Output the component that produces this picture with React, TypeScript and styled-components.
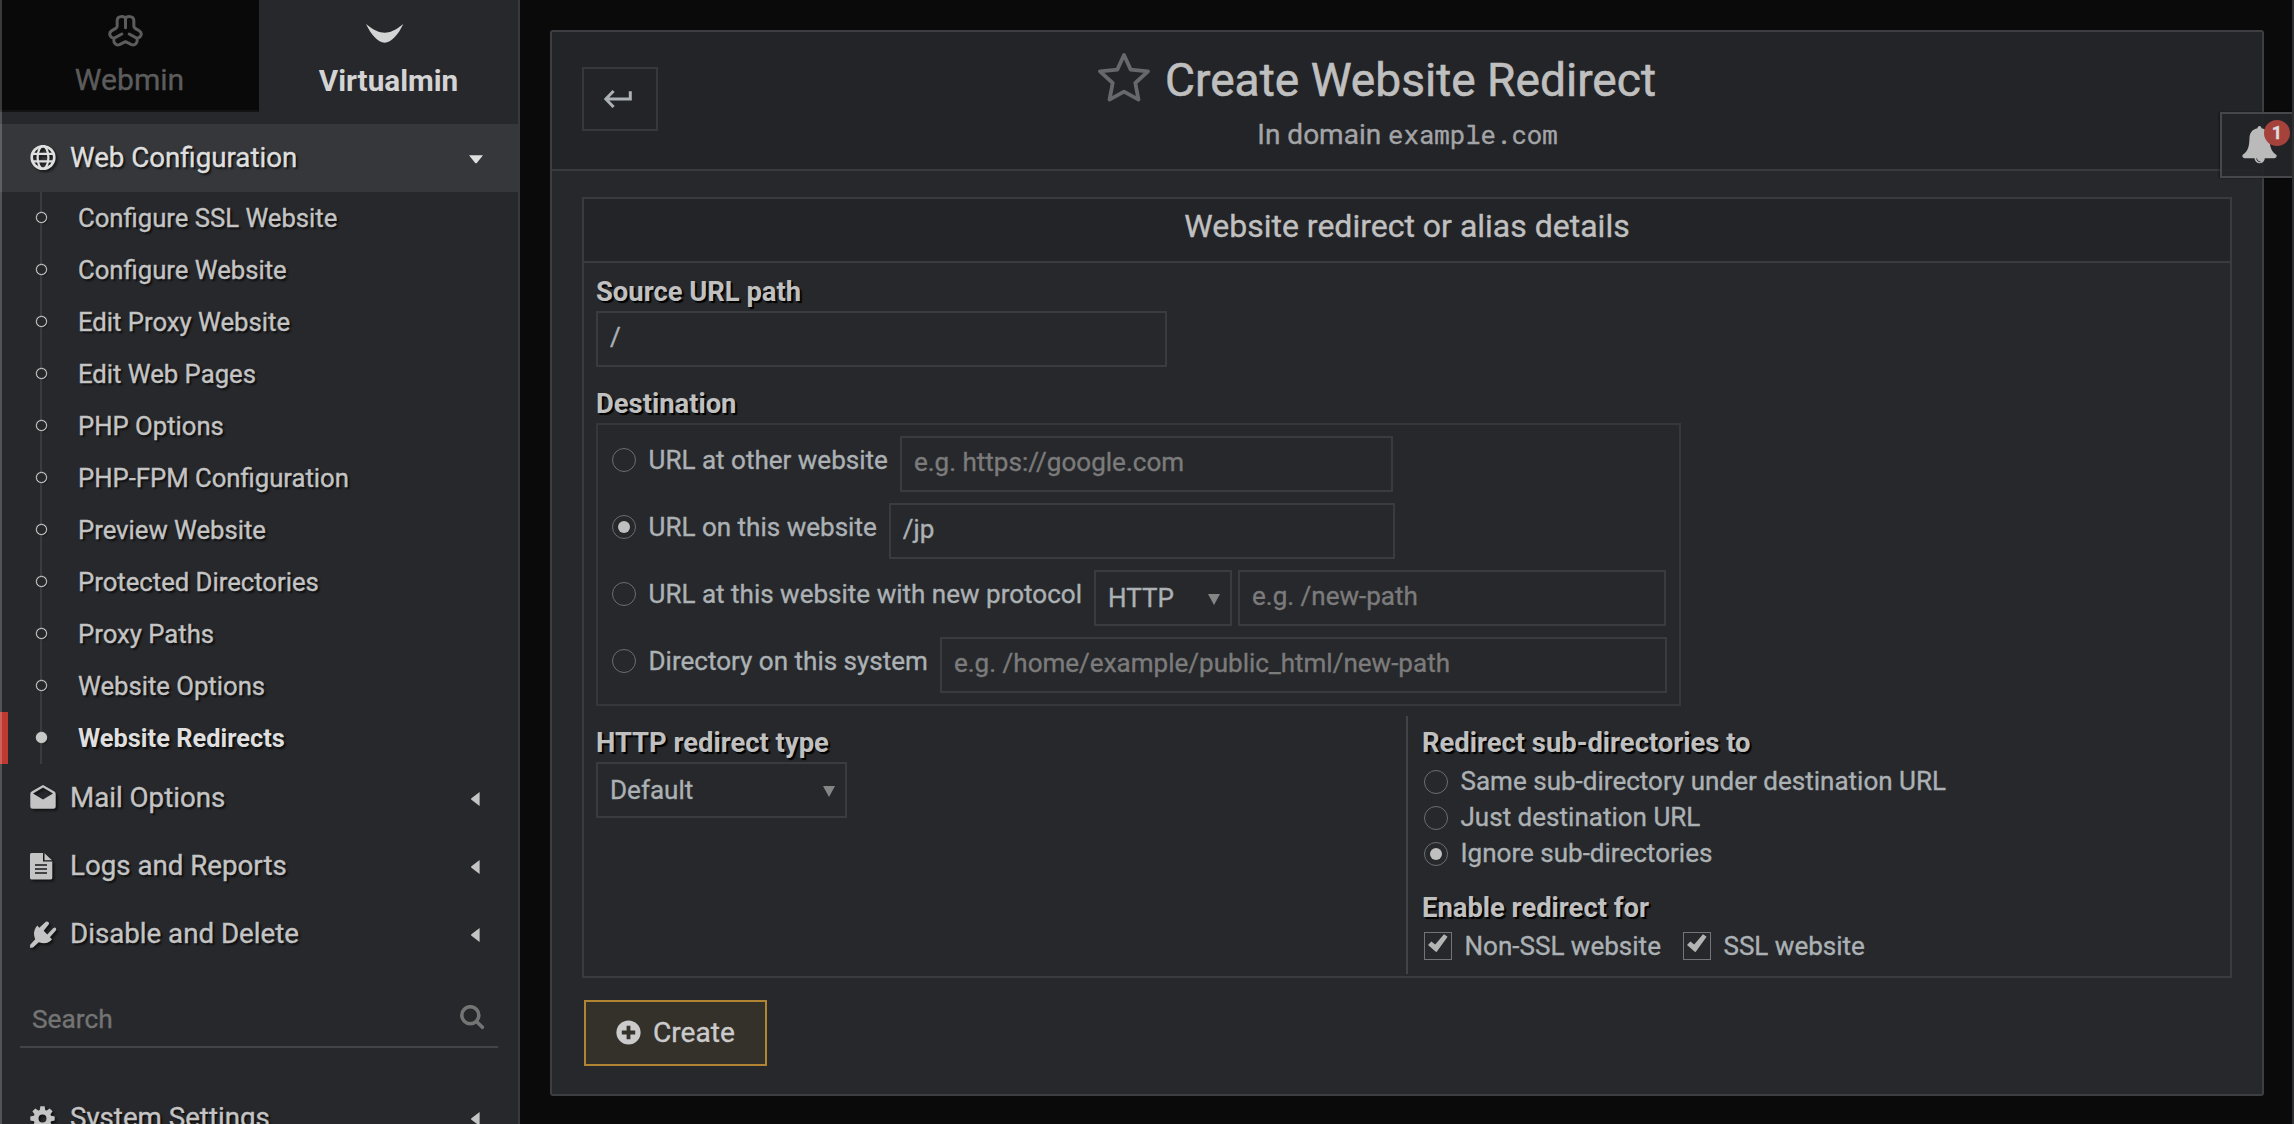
import React from 'react';
import styled, { createGlobalStyle } from 'styled-components';

const c = {
  page: '#0a0a0a',
  panel: '#27282b',
  head: '#232427',
  line: '#3a3b3f',
  text: '#c4c4c4',
  field: '#abb1b4',
  muted: '#7b7b7b',
};

const Global = createGlobalStyle`
  * { box-sizing: border-box; }
  body { margin: 0; background: ${c.page}; font-family: Roboto, "Liberation Sans", sans-serif; color: ${c.text}; -webkit-text-stroke: 0.35px; }
  input { font-family: inherit; -webkit-text-stroke: 0.35px; }
  svg { display: block; }
`;

const Screen = styled.div`
  position: relative;
  display: flex;
  width: 2294px;
  height: 1124px;
  overflow: hidden;
  background: ${c.page};
  border-right: 2px solid #2f3032;
`;

/* ---------- sidebar ---------- */

const Sidebar = styled.aside`
  position: relative;
  flex: none;
  width: 520px;
  height: 1124px;
  overflow: hidden;
  background: ${c.panel};
  border-right: 2px solid #38393c;
  &::after {
    content: '';
    position: absolute;
    inset: 0 auto 0 0;
    width: 2px;
    background: rgba(255, 255, 255, 0.2);
  }
`;

const Tabs = styled.nav`
  display: grid;
  grid-template-columns: 259px 259px;
  height: 112px;
  margin-bottom: 12px;
`;

const Tab = styled.div<{ $active?: boolean }>`
  display: flex;
  flex-direction: column;
  align-items: center;
  padding-top: ${p => (p.$active ? 24 : 15)}px;
  gap: ${p => (p.$active ? 18 : 13)}px;
  background: ${p => (p.$active ? c.panel : '#090909')};
  border-bottom: ${p => (p.$active ? 'none' : '2px solid #131313')};
  color: ${p => (p.$active ? '#d4d4d4' : '#5c5c5c')};
  font-size: ${p => (p.$active ? 29.7 : 30.1)}px;
  font-weight: ${p => (p.$active ? 700 : 400)};
  line-height: 40px;
  -webkit-text-stroke: ${p => (p.$active ? 0 : 0.35)}px;
  svg { margin-left: ${p => (p.$active ? -7 : -8)}px; flex: none; }
`;

const Section = styled.div<{ $open?: boolean }>`
  display: flex;
  align-items: center;
  height: 68px;
  padding: 0 35px 0 30px;
  background: ${p => (p.$open ? '#36373a' : 'transparent')};
  color: ${p => (p.$open ? '#dfdfdf' : c.text)};
  font-size: 27.7px;
  text-shadow: 2px 2px 2px rgba(0, 0, 0, 0.7);
`;

const SectionIcon = styled.span`
  display: flex;
  width: 40px;
  filter: drop-shadow(2px 2px 1px rgba(0, 0, 0, 0.55));
`;

const SectionName = styled.span`
  flex: 1;
  padding-bottom: 2px;
`;

const Caret = styled.span<{ $open?: boolean }>`
  display: flex;
  justify-content: center;
  width: 16px;
  margin-right: ${p => (p.$open ? -1 : 0)}px;
  padding-top: 2px;
`;

const SubItem = styled.div<{ $current?: boolean }>`
  display: flex;
  align-items: center;
  height: 52px;
  border-left: 8px solid ${p => (p.$current ? '#be3a31' : 'transparent')};
  padding-left: 27px;
  gap: 31px;
  color: ${p => (p.$current ? '#dfdfdf' : c.text)};
  font-size: ${p => (p.$current ? 25.4 : 25.68)}px;
  font-weight: ${p => (p.$current ? 700 : 400)};
  -webkit-text-stroke: ${p => (p.$current ? 0 : 0.35)}px;
  text-shadow: 2px 2px 2px rgba(0, 0, 0, 0.7);
`;

const Track = styled.span`
  display: flex;
  align-items: center;
  justify-content: center;
  align-self: stretch;
  width: 12px;
  background: linear-gradient(${c.line}, ${c.line}) center / 2px 100% no-repeat;
`;

const Dot = styled.span<{ $current?: boolean }>`
  width: 11px;
  height: 11px;
  margin-bottom: 1px;
  border: 1px solid #cfcfcf;
  border-radius: 50%;
  background: ${p => (p.$current ? '#c8c8c8' : c.panel)};
  box-shadow: 0 0 0 0.4px rgba(200, 200, 200, 0.5), 1px 1px 1px rgba(0, 0, 0, 0.4);
`;

const Search = styled.div`
  display: flex;
  align-items: center;
  justify-content: space-between;
  height: 60px;
  margin: 20px 20px 36px;
  padding: 3px 13px 0 12px;
  border-bottom: 2px solid #434448;
  color: #747474;
  font-size: 26.3px;
  svg { margin-bottom: 3px; }
`;

/* ---------- main ---------- */

const Main = styled.main`
  flex: 1;
  padding: 30px 28px 28px 30px;
`;

const Panel = styled.section`
  height: 1066px;
  background: ${c.panel};
  border: 2px solid #3d3e42;
  border-radius: 3px;
`;

const PanelHead = styled.header`
  display: grid;
  grid-template: 137px / 30px 76px 1fr 30px;
  border-bottom: 2px solid ${c.line};
  background: ${c.head};
`;

const Back = styled.button`
  grid-area: 1 / 2;
  display: flex;
  align-items: center;
  justify-content: center;
  height: 64px;
  margin: 35px 0 0;
  padding: 0 5px 0 0;
  background: transparent;
  border: 2px solid #37383b;
`;

const Titles = styled.div`
  grid-area: 1 / 1 / 2 / -1;
  justify-self: center;
  display: flex;
  flex-direction: column;
  align-items: center;
  padding-top: 18px;
`;

const Title = styled.h1`
  display: flex;
  align-items: center;
  gap: 15px;
  height: 60px;
  margin: 0;
  padding-right: 60px;
  font-size: 46.1px;
  font-weight: 400;
  color: #bfbfbf;
  white-space: nowrap;
  -webkit-text-stroke: 0.6px;
  svg { margin-bottom: 6px; }
`;

const Subtitle = styled.p`
  margin: 4px 0 0 1px;
  font-size: 28px;
  line-height: 40px;
  color: #a3a4a8;
`;

const Mono = styled.code`
  font-family: "Roboto Mono", "DejaVu Sans Mono", monospace;
  font-size: 25.7px;
`;

const PanelBody = styled.div`
  padding: 26px 30px 0;
`;

const Details = styled.div`
  height: 781px;
  border: 2px solid ${c.line};
`;

const DetailsHead = styled.h2`
  display: flex;
  align-items: center;
  justify-content: center;
  height: 64px;
  margin: 0;
  padding-bottom: 8px;
  border-bottom: 2px solid ${c.line};
  background: ${c.head};
  font-size: 32px;
  font-weight: 400;
  color: #c0c0c0;
`;

const Fields = styled.div`
  padding: 10px 12px 0;
`;

const Label = styled.div<{ $gap?: boolean }>`
  height: 38px;
  margin-top: ${p => (p.$gap ? 18 : 0)}px;
  font-size: 27.38px;
  font-weight: 700;
  line-height: 38px;
  color: #c0c0c0;
  text-shadow: 2px 2px 1px #000;
  -webkit-text-stroke: 0;
`;

const TextInput = styled.input<{ $w: number }>`
  display: block;
  flex: none;
  width: ${p => p.$w}px;
  height: 56px;
  padding: 0 12px 5px;
  border: 2px solid ${c.line};
  border-radius: 0;
  outline: none;
  background: transparent;
  font-size: 26.04px;
  color: ${c.field};
  &::placeholder { color: ${c.muted}; opacity: 1; }
`;

const SelectBox = styled.div<{ $w: number }>`
  display: flex;
  flex: none;
  align-items: center;
  justify-content: space-between;
  width: ${p => p.$w}px;
  height: 56px;
  padding: 0 10px 0 12px;
  border: 2px solid ${c.line};
  font-size: 26.04px;
  color: ${c.field};
  svg { margin-top: 3px; }
  & + input { margin-left: 6px; }
`;

const Choices = styled.div`
  display: flex;
  flex-direction: column;
  gap: 11px;
  width: 1085px;
  height: 283px;
  padding: 11px 14px;
  border: 2px solid #36373b;
`;

const Choice = styled.div`
  display: flex;
  height: 56px;
`;

const ChoiceLabel = styled.label`
  display: flex;
  align-items: center;
  height: 48px;
  margin-right: 12px;
  padding-bottom: 1px;
  font-size: 26.04px;
  color: ${c.field};
  white-space: nowrap;
`;

const OptionLabel = styled(ChoiceLabel)`
  height: 36px;
  margin-right: 22px;
  padding-bottom: 0;
`;

const Ring = styled.span`
  display: flex;
  align-items: center;
  justify-content: center;
  width: 24px;
  height: 24px;
  margin: 1px 12.5px 0 0;
  border: 1.5px solid #6c6d70;
  border-radius: 50%;
`;

const Pip = styled.span`
  width: 12px;
  height: 12px;
  border-radius: 50%;
  background: #c0c0c0;
`;

const Box = styled.span`
  display: flex;
  justify-content: center;
  width: 28px;
  height: 28px;
  margin-right: 12.5px;
  padding-top: 1px;
  border: 1.5px solid #737477;
`;

const Split = styled.div`
  display: grid;
  grid-template-columns: 810px 1fr;
  height: 258px;
  margin-top: 10px;
`;

const Column = styled.div<{ $ruled?: boolean }>`
  padding: 8px 0 0 ${p => (p.$ruled ? 14 : 0)}px;
  border-left: ${p => (p.$ruled ? '2px solid #424347' : 'none')};
`;

const Options = styled.div<{ $inline?: boolean }>`
  display: flex;
  flex-direction: ${p => (p.$inline ? 'row' : 'column')};
  padding: 1px 0 0 2px;
`;

const Create = styled.button`
  display: flex;
  align-items: center;
  gap: 12px;
  width: 183px;
  height: 66px;
  margin: 22px 0 0 2px;
  padding: 0 0 2px 30px;
  border: 2px solid #b08432;
  background: #34302a;
  font-family: inherit;
  font-size: 28.1px;
  color: #cbcbcb;
  -webkit-text-stroke: 0.35px;
`;

/* ---------- notification tab, floating over the page edge ---------- */

const Notice = styled.div`
  position: absolute;
  top: 112px;
  right: -4px;
  width: 76px;
  height: 66px;
  border: 2px solid #46474b;
  background: rgba(36, 37, 40, 0.95);
  box-shadow: -1px 0 2px rgba(0, 0, 0, 0.4);
  padding: 12px 0 0 20px;
`;

const Badge = styled.span`
  position: absolute;
  top: 6px;
  left: 42px;
  width: 26px;
  height: 26px;
  border-radius: 50%;
  background: #a5423b;
  color: #dedede;
  font-size: 18px;
  font-weight: 700;
  line-height: 25px;
  text-align: center;
`;

/* ---------- drawings ---------- */

const WebminLogo = () => (
  <svg width="35" height="32" viewBox="0 0 104 96" fill="none" stroke="currentColor" strokeWidth="9" strokeLinecap="round" strokeLinejoin="round">
    <path d="M52 11C49 2 27 2 27 16V33Q27 37 23 40L11 47C1 53 3 66 17 70C15 84 24 93 34 89L52 80L70 89C80 93 89 84 87 70C101 66 103 53 93 47L81 40Q77 37 77 33V16C77 2 55 2 52 11Z" />
    <path d="M52 11V38M17 70L41 57M87 70L63 57" />
  </svg>
);

const VirtualminLogo = () => (
  <svg width="37.3" height="18.7" viewBox="0 0 112 56" fill="currentColor">
    <path d="M0 0C25 20 40 26 56 26C72 26 87 20 112 0C97 32 76 56 56 56C36 56 15 32 0 0Z" />
  </svg>
);

const Globe = () => (
  <svg width="26" height="26" viewBox="0 0 26 26" fill="none" stroke="currentColor" strokeWidth="2.2">
    <circle cx="13" cy="12.5" r="11.3" strokeWidth="2.6" />
    <ellipse cx="13" cy="12.5" rx="5.4" ry="11.3" />
    <path d="M2.2 8.8H23.8M2.2 16.4H23.8" />
  </svg>
);

const Mail = () => (
  <svg width="26" height="26" viewBox="0 0 26 26" fill="currentColor">
    <path fillRule="evenodd" d="M13 0L24.4 6.6Q25.7 7.5 25.7 9V21.2Q25.7 23.7 23.2 23.7H2.8Q.3 23.7.3 21.2V9Q.3 7.5 1.6 6.6ZM13 2.5L3 8.6L13 14.6L23 8.6Z" />
  </svg>
);

const File = () => (
  <svg width="23" height="27" viewBox="0 0 23 27" fill="currentColor">
    <path fillRule="evenodd" d="M1.5 0H13V8.6H22.3V25Q22.3 26.4 20.9 26.4H1.5Q0 26.4 0 25V1.5Q0 0 1.5 0ZM5 11.3V12.7H17V11.3ZM5 15.3V16.7H17V15.3ZM5 19.3V20.7H17V19.3Z" />
    <path d="M14.5 .3L22 7.3H14.5Z" />
  </svg>
);

const Plug = () => (
  <svg width="27" height="27" viewBox="0 0 27 27" fill="currentColor">
    <path d="M7.2 4.6L9.3 6.7L15.8.8Q17.3 0 18.4 1T18.7 3.6L13.7 9.8L17.3 13.4L23.2 7.2Q24.9 6 25.9 7.2T25.6 9.8L19.9 16.2L22 18.3L20.4 19.9Q16 24 8.8 21.2L3 26.6L0 26.8L.2 23.8L5.2 18.2Q2.6 11.6 5.5 7Z" />
  </svg>
);

const teeth = [0, 45, 90, 135, 180, 225, 270, 315];
const Gear = () => (
  <svg width="25" height="25" viewBox="-12.5 -12.5 25 25" fill="currentColor">
    {teeth.map(a => (
      <path key={a} d="M-2.9 -7.5L-2.1 -12.2H2.1L2.9 -7.5Z" transform={`rotate(${a})`} />
    ))}
    <circle r="6.5" fill="none" stroke="currentColor" strokeWidth="5" />
  </svg>
);

const CaretLeft = () => (
  <svg width="9" height="14" viewBox="0 0 9 14" fill="currentColor"><path d="M8.6 0V14L.4 7.7Q-.2 7 .4 6.3Z" /></svg>
);
const CaretDown = () => (
  <svg width="14" height="9" viewBox="0 0 14 9" fill="currentColor"><path d="M0 .2H14L7.8 8Q7 8.7 6.2 8Z" /></svg>
);

const Magnifier = () => (
  <svg width="25" height="25" viewBox="0 0 25 25" fill="none" stroke="currentColor" strokeWidth="3.6" strokeLinecap="round">
    <circle cx="10.3" cy="10.2" r="8.5" />
    <path d="M17 17L22.4 22.3" />
  </svg>
);

const ReturnArrow = () => (
  <svg width="28" height="18" viewBox="0 0 28 18" fill="none" stroke="#abb1b4" strokeWidth="3">
    <path d="M9.6 1L1.8 9L9.6 17M1.8 9H26.3V1.2" />
  </svg>
);

const Star = () => (
  <svg width="52" height="50" viewBox="0 0 52 50" fill="none" stroke="#67686b" strokeWidth="3.8" strokeLinejoin="round">
    <path d="M26 3L32.7 17.6L50 19.3L37.3 31L40.5 47.6L26 39.6L11.5 47.6L14.7 31L2 19.3L19.3 17.6Z" />
  </svg>
);

const Arrow = () => (
  <svg width="12" height="11" viewBox="0 0 12 11" fill="#858585"><path d="M0 0H12L6 11Z" /></svg>
);

const Tick = () => (
  <svg width="20" height="18" viewBox="0 0 20 18" fill="#b4b4b4"><path d="M0 11L3.4 7.6L7.2 10.4L16 .2L19.6 2.8L8.6 18Q7.6 18 7.2 17.2Z" /></svg>
);

const PlusDisc = () => (
  <svg width="25" height="25" viewBox="0 0 25 25" fill="currentColor">
    <circle cx="12.5" cy="12.5" r="12.1" />
    <path d="M12.5 5.8V19.2M5.8 12.5H19.2" stroke="#34302a" strokeWidth="3.8" />
  </svg>
);

const Bell = () => (
  <svg width="35" height="38" viewBox="0 0 104 114" fill="#bababa">
    <path d="M52 0C56 0 58 3 58 7C73 10 81 20 82 36C83 62 86 76 103 87Q105 96 97 97H7Q-1 96 1 87C18 76 21 62 22 36C23 20 31 10 46 7C46 3 48 0 52 0Z" />
    <path d="M37 96A15.500 16 0 0 0 68 96Z" />
    <path d="M43 97Q44 107 55 108" fill="none" stroke="#3a3a3c" strokeWidth="3" />
  </svg>
);

/* ---------- data ---------- */

const subItems = [
  'Configure SSL Website', 'Configure Website', 'Edit Proxy Website', 'Edit Web Pages', 'PHP Options',
  'PHP-FPM Configuration', 'Preview Website', 'Protected Directories', 'Proxy Paths', 'Website Options', 'Website Redirects',
];

const sections = [
  { name: 'Mail Options', icon: <Mail /> },
  { name: 'Logs and Reports', icon: <File /> },
  { name: 'Disable and Delete', icon: <Plug /> },
];

const Radio = ({ on }: { on?: boolean }) => <Ring>{on && <Pip />}</Ring>;

const MenuSection = ({ name, icon, open }: { name: string; icon: React.ReactNode; open?: boolean }) => (
  <Section $open={open}>
    <SectionIcon>{icon}</SectionIcon>
    <SectionName>{name}</SectionName>
    <Caret $open={open}>{open ? <CaretDown /> : <CaretLeft />}</Caret>
  </Section>
);

export default function App() {
  return (
    <>
      <Global />
      <Screen>
        <Sidebar>
          <Tabs>
            <Tab><WebminLogo />Webmin</Tab>
            <Tab $active><VirtualminLogo />Virtualmin</Tab>
          </Tabs>
          <MenuSection name="Web Configuration" icon={<Globe />} open />
          {subItems.map(name => {
            const current = name === 'Website Redirects';
            return (
              <SubItem key={name} $current={current}>
                <Track><Dot $current={current} /></Track>
                {name}
              </SubItem>
            );
          })}
          {sections.map(s => <MenuSection key={s.name} {...s} />)}
          <Search>Search<Magnifier /></Search>
          <MenuSection name="System Settings" icon={<Gear />} />
        </Sidebar>

        <Main>
          <Panel>
            <PanelHead>
              <Titles>
                <Title><Star />Create Website Redirect</Title>
                <Subtitle>In domain <Mono>example.com</Mono></Subtitle>
              </Titles>
              <Back aria-label="Back"><ReturnArrow /></Back>
            </PanelHead>
            <PanelBody>
              <Details>
                <DetailsHead>Website redirect or alias details</DetailsHead>
                <Fields>
                  <Label>Source URL path</Label>
                  <TextInput $w={571} defaultValue="/" />
                  <Label $gap>Destination</Label>
                  <Choices>
                    <Choice>
                      <ChoiceLabel><Radio />URL at other website</ChoiceLabel>
                      <TextInput $w={493} placeholder="e.g. https://google.com" />
                    </Choice>
                    <Choice>
                      <ChoiceLabel><Radio on />URL on this website</ChoiceLabel>
                      <TextInput $w={506} defaultValue="/jp" />
                    </Choice>
                    <Choice>
                      <ChoiceLabel><Radio />URL at this website with new protocol</ChoiceLabel>
                      <SelectBox $w={138}>HTTP<Arrow /></SelectBox>
                      <TextInput $w={428} placeholder="e.g. /new-path" />
                    </Choice>
                    <Choice>
                      <ChoiceLabel><Radio />Directory on this system</ChoiceLabel>
                      <TextInput $w={727} placeholder="e.g. /home/example/public_html/new-path" />
                    </Choice>
                  </Choices>
                  <Split>
                    <Column>
                      <Label>HTTP redirect type</Label>
                      <SelectBox $w={251}>Default<Arrow /></SelectBox>
                    </Column>
                    <Column $ruled>
                      <Label>Redirect sub-directories to</Label>
                      <Options>
                        <OptionLabel><Radio />Same sub-directory under destination URL</OptionLabel>
                        <OptionLabel><Radio />Just destination URL</OptionLabel>
                        <OptionLabel><Radio on />Ignore sub-directories</OptionLabel>
                      </Options>
                      <Label $gap>Enable redirect for</Label>
                      <Options $inline>
                        <OptionLabel><Box><Tick /></Box>Non-SSL website</OptionLabel>
                        <OptionLabel><Box><Tick /></Box>SSL website</OptionLabel>
                      </Options>
                    </Column>
                  </Split>
                </Fields>
              </Details>
              <Create><PlusDisc />Create</Create>
            </PanelBody>
          </Panel>
        </Main>

        <Notice><Bell /><Badge>1</Badge></Notice>
      </Screen>
    </>
  );
}
